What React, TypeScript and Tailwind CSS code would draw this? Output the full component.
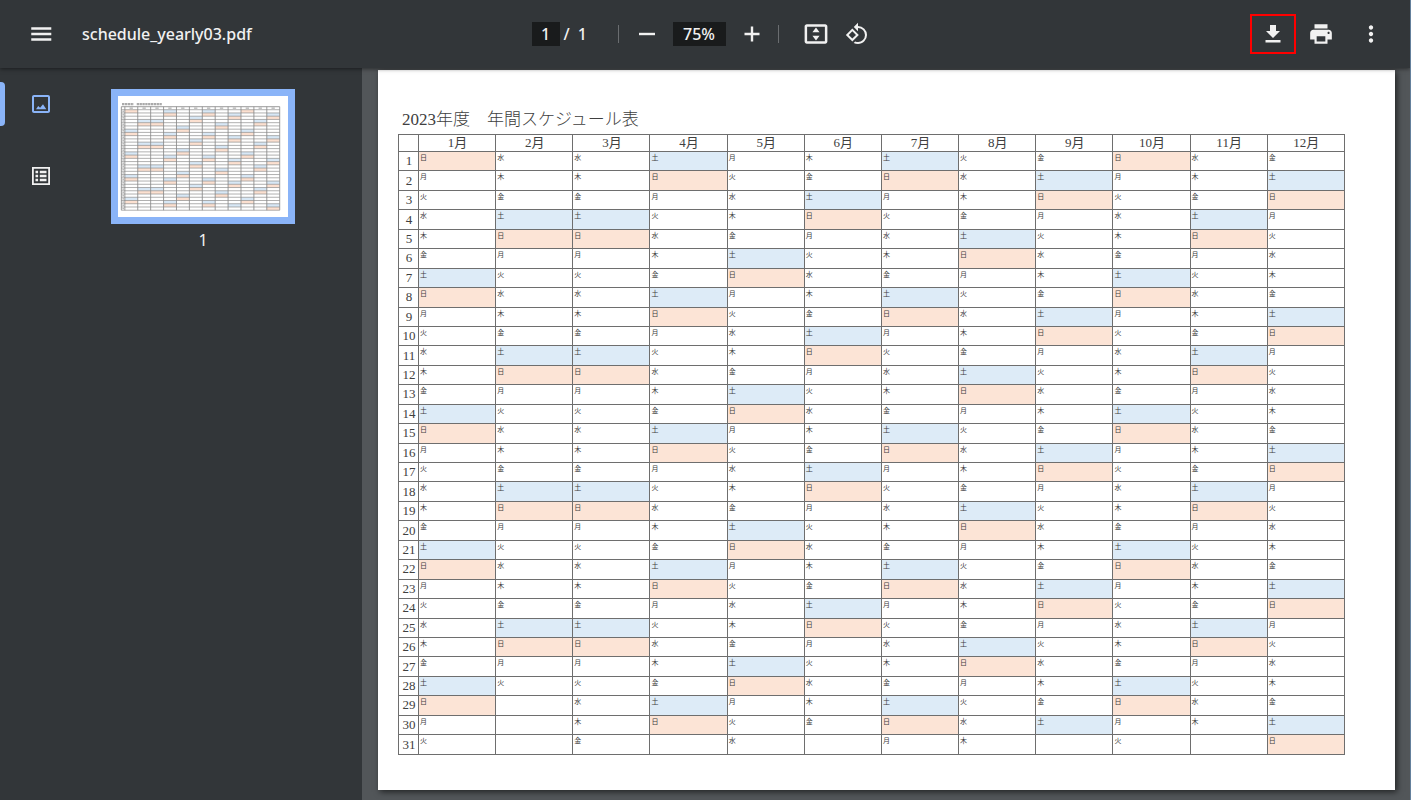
import React from 'react';

const WEEKDAYS = ['日', '月', '火', '水', '木', '金', '土'];
const YEAR = 2023;
const MONTHS = Array.from({ length: 12 }, (_, i) => i + 1);
const DAYS = Array.from({ length: 31 }, (_, i) => i + 1);

// 0 = Sunday ... 6 = Saturday, null when the month has no such day
function weekdayOf(month: number, day: number): number | null {
  const date = new Date(YEAR, month - 1, day);
  return date.getMonth() === month - 1 ? date.getDay() : null;
}

function cellColor(weekday: number | null) {
  if (weekday === 0) return 'bg-[#fce4d6]';
  if (weekday === 6) return 'bg-[#ddebf7]';
  return '';
}

interface IconProps {
  d: string;
  className?: string;
}

const Icon: React.FC<IconProps> = ({ d, className = 'size-6' }) => (
  <svg viewBox="0 0 24 24" fill="currentColor" className={className} aria-hidden="true">
    <path d={d} />
  </svg>
);

const ICONS = {
  menu: 'M3 18.3h18.5v-2.4H3v2.4zm0-5.1h18.5v-2.4H3v2.4zm0-7.5v2.4h18.5V5.7H3z',
  remove: 'M20 13.2H4v-2.4h16v2.4z',
  add: 'M19.5 13.2h-6.3v6.3h-2.4v-6.3H4.500v-2.4h6.300V4.500h2.400v6.300h6.300v2.400z',
  fit: 'M20.500 3H3.500C2.400 3 1.500 3.900 1.500 5v14c0 1.100.900 2 2 2h17c1.100 0 2-.900 2-2V5c0-1.100-.900-2-2-2zm-.300 15.800H3.800V5.200h16.400v13.600zM12 6l-3.300 4.300h6.600zM12 18l-3.300-4.300h6.600z',
  rotate:
    'M7.34 6.41.86 12.9l6.49 6.48 6.49-6.48-6.5-6.49zM3.69 12.9l3.66-3.66L11 12.9l-3.66 3.66-3.65-3.66zm15.67-6.26A8.95 8.95 0 0 0 13 4V.76L8.76 5 13 9.24V6c1.79 0 3.58.68 4.95 2.05a7.007 7.007 0 0 1 0 9.9 6.973 6.973 0 0 1-7.79 1.44l-1.49 1.49C10.02 21.62 11.51 22 13 22c2.3 0 4.61-.88 6.36-2.64a8.98 8.98 0 0 0 0-12.72z',
  download: 'M19 9h-4V3H9v6H5l7 7 7-7zM4.500 18v2.400h15V18h-15z',
  print:
    'M19 8H5c-1.66 0-3 1.34-3 3v6h4v4h12v-4h4v-6c0-1.66-1.34-3-3-3zm-3 11H8v-5h8v5zm3-7c-.55 0-1-.45-1-1s.45-1 1-1 1 .45 1 1-.45 1-1 1zm-1-9H6v4h12V3z',
  more: 'M12 8c1.1 0 2-.9 2-2s-.9-2-2-2-2 .9-2 2 .9 2 2 2zm0 2c-1.1 0-2 .9-2 2s.9 2 2 2 2-.9 2-2-.9-2-2-2zm0 6c-1.1 0-2 .9-2 2s.9 2 2 2 2-.9 2-2-.9-2-2-2z',
  thumbnails:
    'M19 3H5c-1.1 0-2 .9-2 2v14c0 1.1.9 2 2 2h14c1.1 0 2-.9 2-2V5c0-1.1-.9-2-2-2zm0 16H5V5h14v14zM7 17.300l2.200-3.300 1.900 1.700 2.900-3.400 3.300 5z',
  outline:
    'M3 3v18h18V3H3zm16.200 16.200H4.800V4.800h14.400v14.400zM10.800 6.800h6.700v2.400h-6.700zM10.800 10.800h6.700v2.400h-6.700zM10.800 14.800h6.700v2.400h-6.700zM6.500 6.800h2.600v2.400H6.500zM6.500 10.800h2.600v2.400H6.500zM6.500 14.800h2.600v2.400H6.500z',
};

const Toolbar: React.FC = () => (
  <header className="relative z-10 grid grid-cols-[1fr_auto_1fr] items-center h-[68px] pl-7 pr-[26px] bg-[#323639] text-[#f1f1f1] text-base font-medium shadow-[0_1px_4px_rgba(0,0,0,0.5)]">
    <div className="flex items-center gap-7">
      <button type="button" aria-label="Menu" className="size-[26px]">
        <Icon d={ICONS.menu} className="size-[26px]" />
      </button>
      <h1 className="font-medium">schedule_yearly03.pdf</h1>
    </div>

    <div className="flex items-center pr-3">
      <input
        aria-label="Page number"
        defaultValue="1"
        className="w-7 h-6 bg-[#191b1c] text-center outline-none"
      />
      <span className="flex gap-2 w-[58px] pl-1">
        <span>/</span>
        <span>1</span>
      </span>
      <span className="w-px h-[18px] bg-[#6a6d70]" />
      <button type="button" aria-label="Zoom out" className="ml-4 size-6">
        <Icon d={ICONS.remove} />
      </button>
      <input
        aria-label="Zoom level"
        defaultValue="75%"
        className="w-[53px] h-6 mx-[14px] bg-[#191b1c] text-center outline-none"
      />
      <button type="button" aria-label="Zoom in" className="size-6">
        <Icon d={ICONS.add} />
      </button>
      <span className="w-px h-[18px] ml-[14px] bg-[#6a6d70]" />
      <button type="button" aria-label="Fit to page" className="ml-6 size-[26px]">
        <Icon d={ICONS.fit} className="size-[26px]" />
      </button>
      <button type="button" aria-label="Rotate counterclockwise" className="ml-4 size-6">
        <Icon d={ICONS.rotate} />
      </button>
    </div>

    <div className="flex items-center justify-end">
      <button
        type="button"
        aria-label="Download"
        className="flex items-center justify-center w-[46px] h-10 border-2 border-[#ff0000]"
      >
        <Icon d={ICONS.download} />
      </button>
      <button type="button" aria-label="Print" className="ml-3 size-[26px]">
        <Icon d={ICONS.print} className="size-[26px]" />
      </button>
      <button type="button" aria-label="More actions" className="ml-6 size-[26px]">
        <Icon d={ICONS.more} className="size-[26px]" />
      </button>
    </div>
  </header>
);

// Miniature of the page, in the page's own units
const PageThumbnail: React.FC = () => {
  const left = 20;
  const top = 64;
  const numCol = 21;
  const head = 18;
  const colW = 77.2;
  const rowH = 19.4;
  const right = left + numCol + colW * 12;
  const bottom = top + head + rowH * 31;

  return (
    <svg viewBox="0 0 1017 724" className="block w-full bg-white" aria-hidden="true">
      {MONTHS.map((m) =>
        DAYS.map((d) => {
          const wd = weekdayOf(m, d);
          if (wd !== 0 && wd !== 6) return null;
          return (
            <rect
              key={`${m}-${d}`}
              x={left + numCol + colW * (m - 1)}
              y={top + head + rowH * (d - 1)}
              width={colW}
              height={rowH}
              fill={wd === 0 ? '#fce0d0' : '#d8e8f6'}
            />
          );
        }),
      )}
      <g stroke="#888" strokeWidth="5">
        <path d={`M${left} ${top}H${right}M${left} ${top}V${bottom}`} />
        {[0, ...DAYS].map((d) => (
          <path key={d} d={`M${left} ${top + head + rowH * d}H${right}`} strokeWidth="4" />
        ))}
        {[0, ...MONTHS].map((m) => (
          <path key={m} d={`M${left + numCol + colW * m} ${top}V${bottom}`} />
        ))}
      </g>
      <path d="M24 49H94M112 49H264" stroke="#aaa" strokeWidth="14" strokeDasharray="14 3" />
      {MONTHS.map((m) => (
        <rect key={m} x={left + numCol + colW * (m - 1) + 28} y={top + 4} width="20" height="9" fill="#bbb" />
      ))}
      {DAYS.map((d) => (
        <rect key={d} x={left + 6} y={top + head + rowH * (d - 1) + 5} width="10" height="9" fill="#bbb" />
      ))}
    </svg>
  );
};

const Sidebar: React.FC = () => (
  <aside className="flex w-[362px] shrink-0 bg-[#323639]">
    <nav className="w-[82px] pt-[14px] flex flex-col gap-7">
      <button
        type="button"
        aria-label="Thumbnails"
        className="relative flex items-center justify-center h-11 text-[#8ab4f8]"
      >
        <span className="absolute left-0 inset-y-0 w-[5px] rounded-r bg-[#8ab4f8]" />
        <Icon d={ICONS.thumbnails} />
      </button>
      <button
        type="button"
        aria-label="Document outline"
        className="flex items-center justify-center h-11 text-[#f1f1f1]"
      >
        <Icon d={ICONS.outline} />
      </button>
    </nav>
    <div className="w-[242px] pt-[21px] flex flex-col items-center">
      <button type="button" aria-label="Page 1" className="w-[184px] border-[7px] border-[#8ab4f8]">
        <PageThumbnail />
      </button>
      <span className="mt-1 text-base leading-6 text-[#f1f1f1]">1</span>
    </div>
  </aside>
);

const ScheduleTable: React.FC = () => (
  <table className="w-full h-[621px] table-fixed border-collapse text-[#404040]">
    <thead>
      <tr className="h-[17px]">
        <th aria-label="日" className="w-5 border border-[#6e6e6e]" />
        {MONTHS.map((m) => (
          <th key={m} className="p-0 pl-px border border-[#6e6e6e] text-[13px] leading-4 font-normal">
            {m}月
          </th>
        ))}
      </tr>
    </thead>
    <tbody>
      {DAYS.map((d) => (
        <tr key={d}>
          <th className="p-0 pl-px border border-[#6e6e6e] text-[13px] leading-4 font-normal align-middle">{d}</th>
          {MONTHS.map((m) => {
            const wd = weekdayOf(m, d);
            return (
              <td
                key={m}
                className={`p-0 pl-px pt-px border border-[#6e6e6e] align-top text-[7px] leading-[10px] ${cellColor(wd)}`}
              >
                {wd === null ? '' : WEEKDAYS[wd]}
              </td>
            );
          })}
        </tr>
      ))}
    </tbody>
  </table>
);

export default function App() {
  return (
    <div
      lang="ja"
      className="flex flex-col h-screen overflow-hidden bg-[#525659] border-r border-[#64809c] font-['Noto_Sans','Noto_Sans_CJK_JP',sans-serif]"
    >
      <Toolbar />
      <div className="flex flex-1 min-h-0">
        <Sidebar />
        <main className="flex-1 min-w-0 pl-4 pr-[15px] pt-[2px]">
          <article className="h-[720px] pt-9 pl-5 pr-[50px] bg-white shadow-[2px_2px_6px_rgba(0,0,0,0.6)] font-['Liberation_Serif','Noto_Sans_CJK_JP',serif]">
            <h2 className="pl-1 text-[17px] leading-7 text-[#404040] font-light">2023年度　年間スケジュール表</h2>
            <ScheduleTable />
          </article>
        </main>
      </div>
    </div>
  );
}
